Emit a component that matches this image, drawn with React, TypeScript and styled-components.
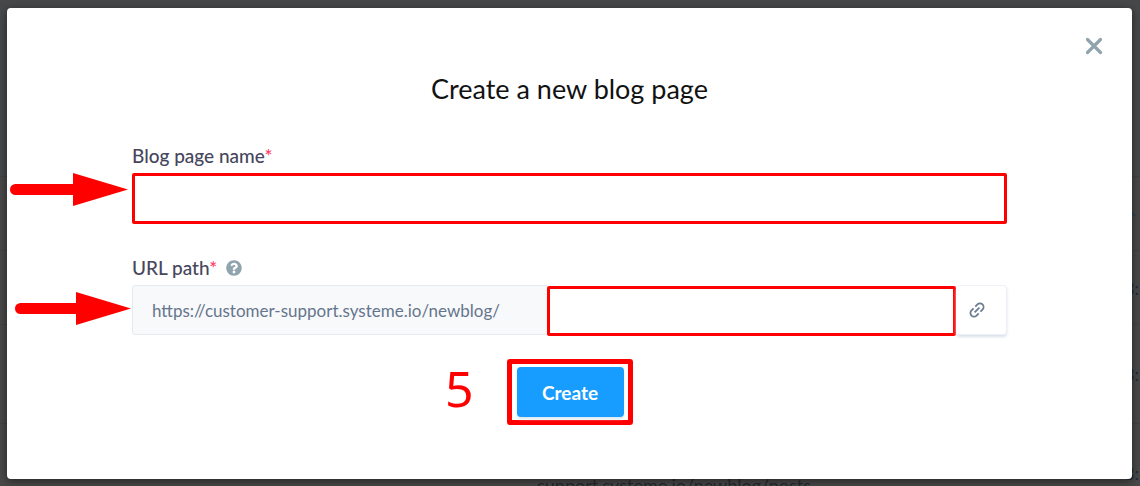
import React from "react";
import styled, { createGlobalStyle } from "styled-components";
import { FaQuestionCircle } from "react-icons/fa";

const GlobalStyle = createGlobalStyle`
  *, *::before, *::after { box-sizing: border-box; }
  html, body, #root { height: 100%; }
  body {
    margin: 0;
    overflow: hidden;
    background: #484848;
    font-family: Lato, "Open Sans", sans-serif;
  }
`;

const Screen = styled.div`
  position: relative;
  min-height: 100%;
  overflow: hidden;
`;

const Backdrop = styled.div`
  position: absolute;
  inset: 0;
  overflow: hidden;
  color: #24292f;
  font-size: 18px;
`;

const BackdropHeader = styled.div`
  height: 177px;
  background: #464849;
  border-bottom: 1px solid #414243;
`;

const BackdropRow = styled.div<{ $tall?: boolean }>`
  display: grid;
  grid-template-columns: 537px 1fr 16px;
  align-items: center;
  height: ${(p) => (p.$tall ? 99 : 74)}px;
  border-bottom: 1px solid #414243;
`;

const PageUrl = styled.span`
  grid-column: 2;
  padding-top: 24px;
`;

const LastCell = styled.span`
  grid-column: 3;
  grid-row: 1;
  display: flex;
  white-space: nowrap;
  color: #1f2b3a;
`;

const Dialog = styled.section`
  position: relative;
  margin: 8px 8px 7px 7px;
  padding: 63px 125px 54px;
  border-radius: 4px;
  background: #fff;
  box-shadow: 0 2px 8px rgba(0, 0, 0, 0.5);
`;

const CloseButton = styled.button`
  position: absolute;
  top: 26px;
  right: 26px;
  display: flex;
  padding: 0;
  border: 0;
  background: none;
  color: #90a4ae;
`;

const Title = styled.h1`
  margin: 0 0 37px;
  color: #121212;
  font-size: 27px;
  font-weight: 400;
  line-height: 36px;
  text-align: center;
`;

const Field = styled.div`
  position: relative;
  margin-bottom: 32px;

  &:last-of-type {
    margin-bottom: 0;
  }
`;

const LabelRow = styled.div`
  display: flex;
  align-items: center;
  gap: 9px;
  height: 24px;
  margin-bottom: 5px;
  color: #90a4ae;
`;

const Label = styled.label`
  color: #46465c;
  font-size: 19px;
  font-weight: 500;
  line-height: 24px;
`;

const Required = styled.span`
  color: #ff4069;
`;

const TextInput = styled.input<{ $grouped?: boolean }>`
  display: block;
  align-self: end;
  width: 100%;
  min-width: 0;
  height: ${(p) => (p.$grouped ? 50 : 51)}px;
  padding: 0 16px;
  border: 3px solid #ff0000;
  border-radius: 2px;
  outline: none;
  background: #fff;
  color: #46465c;
  font: inherit;
  font-size: 17px;
`;

const UrlGroup = styled.div`
  display: grid;
  grid-template-columns: 415fr 409fr 51fr;
  height: 51px;
`;

const UrlPrefix = styled.span`
  display: flex;
  align-items: center;
  height: 50px;
  padding-left: 19px;
  border: 1px solid #e6e9ee;
  border-right: 0;
  border-radius: 4px 0 0 4px;
  background: #f8f9fb;
  color: #66758c;
  font-size: 17px;
  white-space: nowrap;
`;

const CopyButton = styled.button`
  display: flex;
  align-items: center;
  height: 50px;
  padding: 0 0 0 12px;
  border: 1px solid #edf1f6;
  border-left: 0;
  border-radius: 4px;
  background: #fff;
  box-shadow: 0 2px 3px #d9e2ea;
  color: #6b7c93;
`;

const Actions = styled.footer`
  display: flex;
  justify-content: center;
  margin-top: 23px;
`;

const Highlight = styled.div`
  position: relative;
  padding: 3px 4px 3px 5px;
  border: 5px solid #ff0000;
  border-radius: 3px;
`;

const CreateButton = styled.button`
  display: block;
  width: 107px;
  height: 50px;
  padding: 0;
  border: 0;
  border-radius: 4px;
  background: #169dff;
  box-shadow: 0 2px 3px #dbe7f0;
  color: #fff;
  font: inherit;
  font-size: 19px;
  font-weight: 700;
`;

const StepNumber = styled.span`
  position: absolute;
  top: -10px;
  right: 100%;
  padding-right: 38px;
  color: #ff0000;
  font-family: "Noto Sans", sans-serif;
  font-size: 50px;
  line-height: 68px;
`;

const ArrowMark = styled.svg<{ $gap: number; $top: number }>`
  position: absolute;
  right: calc(100% + ${(p) => p.$gap}px);
  top: ${(p) => p.$top}px;
`;

const Arrow = ({ gap, top, length }: { gap: number; top: number; length: number }) => (
  <ArrowMark $gap={gap} $top={top} width={length} height="33" viewBox={`0 0 ${length} 33`} aria-hidden="true">
    <path d={`M5.5 16.5H${length - 50}`} stroke="#f00" strokeWidth="11" strokeLinecap="round" />
    <path d={`M${length - 55} 0L${length} 16.5L${length - 55} 33Z`} fill="#f00" />
  </ArrowMark>
);

const CloseIcon = () => (
  <svg width="24" height="24" viewBox="0 0 24 24" fill="none" stroke="currentColor" strokeWidth="3.2" strokeLinecap="round">
    <path d="M5.5 5.5L18.5 18.5M18.5 5.5L5.5 18.5" />
  </svg>
);

const LinkIcon = () => (
  <svg width="18" height="18" viewBox="-9 -9 18 18" fill="none" stroke="currentColor" strokeWidth="1.8">
    <g transform="rotate(-45)">
      <path d="M-1.2 -3.6H-4.2A3.6 3.6 0 0 0 -4.2 3.6H-1.2M1.2 -3.6H4.2A3.6 3.6 0 0 1 4.2 3.6H1.2M-3.4 0H3.4" />
    </g>
  </svg>
);

const ChevronIcon = () => (
  <svg width="12" height="8" viewBox="0 0 12 8" fill="none" stroke="#2a4054" strokeWidth="1.5">
    <path d="M2 6L7 2L11 6" />
  </svg>
);

export default function App() {
  return (
    <Screen>
      <GlobalStyle />
      <Backdrop aria-hidden="true">
        <BackdropHeader />
        <BackdropRow>
          <LastCell>
            <ChevronIcon />
          </LastCell>
        </BackdropRow>
        <BackdropRow>
          <LastCell>3:2</LastCell>
        </BackdropRow>
        <BackdropRow $tall>
          <LastCell>3:2</LastCell>
        </BackdropRow>
        <BackdropRow $tall>
          <PageUrl>support.systeme.io/newblog/posts</PageUrl>
          <LastCell>3:2</LastCell>
        </BackdropRow>
      </Backdrop>
      <Dialog role="dialog" aria-labelledby="dialog-title">
        <CloseButton type="button" aria-label="Close">
          <CloseIcon />
        </CloseButton>
        <Title id="dialog-title">Create a new blog page</Title>
        <Field>
          <LabelRow>
            <Label htmlFor="page-name">
              Blog page name<Required>*</Required>
            </Label>
          </LabelRow>
          <TextInput id="page-name" type="text" />
          <Arrow gap={4} top={29} length={118} />
        </Field>
        <Field>
          <LabelRow>
            <Label htmlFor="url-path">
              URL path<Required>*</Required>
            </Label>
            <FaQuestionCircle size={16} />
          </LabelRow>
          <UrlGroup>
            <UrlPrefix>https://customer-support.systeme.io/newblog/</UrlPrefix>
            <TextInput $grouped id="url-path" type="text" />
            <CopyButton type="button" aria-label="Copy link">
              <LinkIcon />
            </CopyButton>
          </UrlGroup>
          <Arrow gap={1} top={36} length={116} />
        </Field>
        <Actions>
          <Highlight>
            <StepNumber>5</StepNumber>
            <CreateButton type="submit">Create</CreateButton>
          </Highlight>
        </Actions>
      </Dialog>
    </Screen>
  );
}
